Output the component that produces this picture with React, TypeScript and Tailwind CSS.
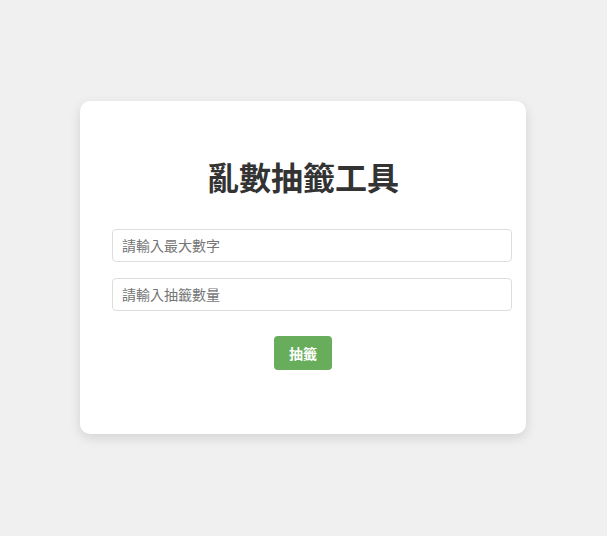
const App = () => {
  return (
    <div
      className="min-h-screen w-full bg-[#f0f0f0] flex items-center justify-center"
      style={{ fontFamily: '"Noto Sans CJK TC", "Noto Sans", sans-serif' }}
    >
      <div className="w-[446px] mr-px mb-px bg-white rounded-[10px] shadow-[0_4px_12px_rgba(0,0,0,0.12)] pt-[32px] pb-[64px] px-[32px] flex flex-col">
        {/* 標題 */}
        <h1 className="mt-[23px] h-[40px] leading-[40px] text-center text-[32px] font-bold text-[#333]">
          亂數抽籤工具
        </h1>

        {/* 輸入欄位 */}
        <input
          type="number"
          placeholder="請輸入最大數字"
          className="mt-[33px] w-[400px] h-[33px] px-[9px] pb-px text-[14px] text-[#333] border border-[#ddd] rounded-[4px] placeholder:text-[#757575] outline-none"
        />
        <input
          type="number"
          placeholder="請輸入抽籤數量"
          className="mt-[16px] w-[400px] h-[33px] px-[9px] pb-px text-[14px] text-[#333] border border-[#ddd] rounded-[4px] placeholder:text-[#757575] outline-none"
        />

        {/* 按鈕 */}
        <div className="mt-[25px] flex justify-center">
          <button className="h-[34px] px-[15px] bg-[#67ad5b] text-white text-[14px] font-bold rounded-[4px]">
            抽籤
          </button>
        </div>
      </div>
    </div>
  );
};

export default App;
